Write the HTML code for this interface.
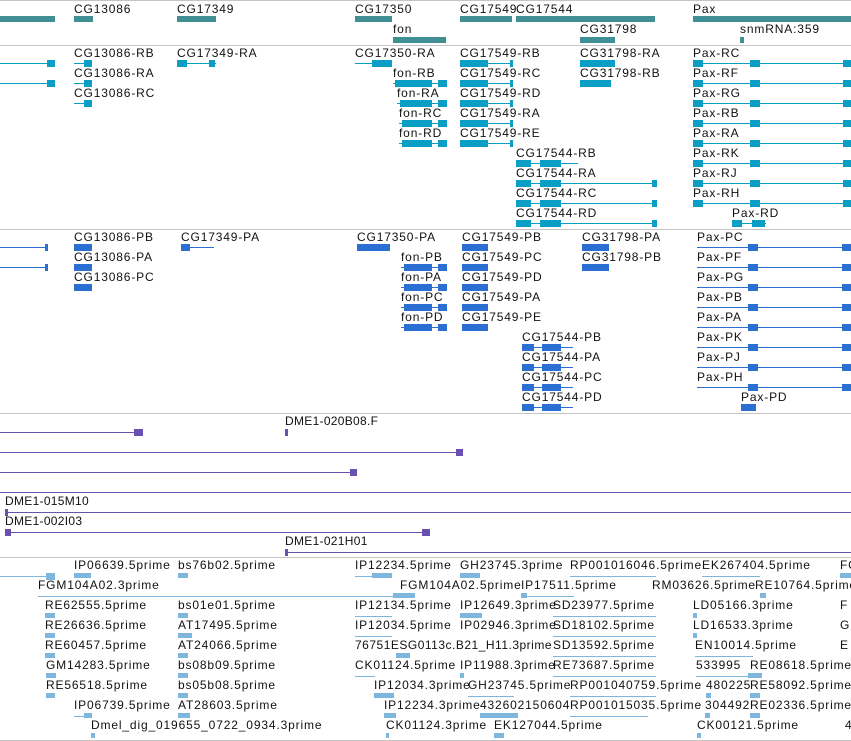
<!DOCTYPE html>
<html><head><meta charset="utf-8"><style>
body{margin:0;width:851px;height:741px;background:#fff;position:relative;overflow:hidden;font-family:"Liberation Sans","DejaVu Sans",sans-serif}
.t{position:absolute;font-size:12px;line-height:14px;letter-spacing:.85px;color:#111;white-space:nowrap}
.s{position:absolute;left:0;width:851px;height:1px;background:#c4c4c4}
.l{position:absolute;height:1px}
.b{position:absolute;height:7px}
.g{background:#3f8f94}.c{background:#0a9ec4}.p{background:#2c6fd2}.v{background:#6a50b0}.e{background:#7fb6de}
</style></head><body>
<div class="s" style="top:0"></div>
<div class="s" style="top:45px"></div>
<div class="s" style="top:229px"></div>
<div class="s" style="top:413px"></div>
<div class="s" style="top:557px"></div>
<div class="s" style="top:740px"></div>

<!-- Track 1 genes -->
<div class="b g" style="left:0;width:55px;top:16px;height:6px"></div>
<div class="t" style="left:74px;top:2px">CG13086</div><div class="b g" style="left:74px;width:19px;top:16px;height:6px"></div>
<div class="t" style="left:177px;top:2px">CG17349</div><div class="b g" style="left:177px;width:39px;top:16px;height:6px"></div>
<div class="t" style="left:355px;top:2px">CG17350</div><div class="b g" style="left:355px;width:37px;top:16px;height:6px"></div>
<div class="t" style="left:393px;top:22px">fon</div><div class="b g" style="left:393px;width:53px;top:37px;height:6px"></div>
<div class="t" style="left:460px;top:2px">CG17549</div><div class="b g" style="left:460px;width:52px;top:16px;height:6px"></div>
<div class="t" style="left:516px;top:2px">CG17544</div><div class="b g" style="left:516px;width:139px;top:16px;height:6px"></div>
<div class="t" style="left:580px;top:22px">CG31798</div><div class="b g" style="left:580px;width:35px;top:37px;height:6px"></div>
<div class="t" style="left:693px;top:2px">Pax</div><div class="b g" style="left:693px;width:158px;top:16px;height:6px"></div>
<div class="t" style="left:740px;top:22px">snmRNA:359</div><div class="b g" style="left:740px;width:4px;top:37px;height:6px"></div>

<!-- Track 2 transcripts -->
<div class="l c" style="left:0;width:50px;top:63px"></div><div class="b c" style="left:47px;width:8px;top:60px"></div>
<div class="l c" style="left:0;width:50px;top:83px"></div><div class="b c" style="left:47px;width:8px;top:80px"></div>
<div class="t" style="left:74px;top:46px">CG13086-RB</div><div class="l c" style="left:74px;width:18px;top:63px"></div><div class="b c" style="left:84px;width:8px;top:60px"></div>
<div class="t" style="left:74px;top:66px">CG13086-RA</div><div class="l c" style="left:74px;width:18px;top:83px"></div><div class="b c" style="left:84px;width:8px;top:80px"></div>
<div class="t" style="left:74px;top:86px">CG13086-RC</div><div class="l c" style="left:74px;width:18px;top:103px"></div><div class="b c" style="left:84px;width:8px;top:100px"></div>
<div class="t" style="left:177px;top:46px">CG17349-RA</div><div class="l c" style="left:177px;width:39px;top:63px"></div><div class="b c" style="left:177px;width:10px;top:60px"></div><div class="b c" style="left:209px;width:6px;top:60px"></div>
<div class="t" style="left:355px;top:46px">CG17350-RA</div><div class="l c" style="left:355px;width:37px;top:63px"></div><div class="b c" style="left:372px;width:20px;top:60px"></div>
<div class="t" style="left:393px;top:66px">fon-RB</div><div class="l c" style="left:393px;width:54px;top:83px"></div><div class="b c" style="left:395px;width:37px;top:80px"></div><div class="b c" style="left:438px;width:9px;top:80px"></div>
<div class="t" style="left:397px;top:86px">fon-RA</div><div class="l c" style="left:397px;width:50px;top:103px"></div><div class="b c" style="left:400px;width:32px;top:100px"></div><div class="b c" style="left:438px;width:9px;top:100px"></div>
<div class="t" style="left:399px;top:106px">fon-RC</div><div class="l c" style="left:399px;width:48px;top:123px"></div><div class="b c" style="left:402px;width:30px;top:120px"></div><div class="b c" style="left:438px;width:9px;top:120px"></div>
<div class="t" style="left:399px;top:126px">fon-RD</div><div class="l c" style="left:399px;width:48px;top:143px"></div><div class="b c" style="left:402px;width:30px;top:140px"></div><div class="b c" style="left:438px;width:9px;top:140px"></div>
<div class="t" style="left:460px;top:46px">CG17549-RB</div>
<div class="t" style="left:460px;top:66px">CG17549-RC</div>
<div class="t" style="left:460px;top:86px">CG17549-RD</div>
<div class="t" style="left:460px;top:106px">CG17549-RA</div>
<div class="t" style="left:460px;top:126px">CG17549-RE</div>
<div class="l c" style="left:460px;width:53px;top:63px"></div><div class="b c" style="left:460px;width:28px;top:60px"></div><div class="b c" style="left:510px;width:3px;top:60px"></div>
<div class="l c" style="left:460px;width:53px;top:83px"></div><div class="b c" style="left:460px;width:28px;top:80px"></div><div class="b c" style="left:510px;width:3px;top:80px"></div>
<div class="l c" style="left:460px;width:53px;top:103px"></div><div class="b c" style="left:460px;width:28px;top:100px"></div><div class="b c" style="left:510px;width:3px;top:100px"></div>
<div class="l c" style="left:460px;width:53px;top:123px"></div><div class="b c" style="left:460px;width:28px;top:120px"></div><div class="b c" style="left:510px;width:3px;top:120px"></div>
<div class="l c" style="left:460px;width:53px;top:143px"></div><div class="b c" style="left:460px;width:28px;top:140px"></div><div class="b c" style="left:510px;width:3px;top:140px"></div>
<div class="t" style="left:580px;top:46px">CG31798-RA</div><div class="b c" style="left:580px;width:35px;top:60px"></div>
<div class="t" style="left:580px;top:66px">CG31798-RB</div><div class="b c" style="left:580px;width:31px;top:80px"></div>
<div class="t" style="left:516px;top:146px">CG17544-RB</div><div class="l c" style="left:516px;width:62px;top:163px"></div><div class="b c" style="left:516px;width:15px;top:160px"></div><div class="b c" style="left:540px;width:21px;top:160px"></div>
<div class="t" style="left:516px;top:166px">CG17544-RA</div><div class="l c" style="left:516px;width:141px;top:183px"></div><div class="b c" style="left:516px;width:15px;top:180px"></div><div class="b c" style="left:540px;width:21px;top:180px"></div><div class="b c" style="left:652px;width:5px;top:180px"></div>
<div class="t" style="left:516px;top:186px">CG17544-RC</div><div class="l c" style="left:516px;width:141px;top:203px"></div><div class="b c" style="left:516px;width:15px;top:200px"></div><div class="b c" style="left:540px;width:21px;top:200px"></div><div class="b c" style="left:652px;width:5px;top:200px"></div>
<div class="t" style="left:516px;top:206px">CG17544-RD</div><div class="l c" style="left:516px;width:141px;top:223px"></div><div class="b c" style="left:516px;width:15px;top:220px"></div><div class="b c" style="left:540px;width:21px;top:220px"></div><div class="b c" style="left:652px;width:5px;top:220px"></div>
<div class="t" style="left:693px;top:46px">Pax-RC</div>
<div class="t" style="left:693px;top:66px">Pax-RF</div>
<div class="t" style="left:693px;top:86px">Pax-RG</div>
<div class="t" style="left:693px;top:106px">Pax-RB</div>
<div class="t" style="left:693px;top:126px">Pax-RA</div>
<div class="t" style="left:693px;top:146px">Pax-RK</div>
<div class="t" style="left:693px;top:166px">Pax-RJ</div>
<div class="t" style="left:693px;top:186px">Pax-RH</div>
<div class="t" style="left:732px;top:206px">Pax-RD</div><div class="l c" style="left:732px;width:34px;top:223px"></div><div class="b c" style="left:732px;width:10px;top:220px"></div><div class="b c" style="left:752px;width:13px;top:220px"></div>
<div class="l c" style="left:693px;width:158px;top:63px"></div><div class="b c" style="left:693px;width:10px;top:60px"></div><div class="b c" style="left:750px;width:10px;top:60px"></div><div class="b c" style="left:843px;width:8px;top:60px"></div>
<div class="l c" style="left:693px;width:158px;top:83px"></div><div class="b c" style="left:693px;width:10px;top:80px"></div><div class="b c" style="left:750px;width:10px;top:80px"></div><div class="b c" style="left:843px;width:8px;top:80px"></div>
<div class="l c" style="left:693px;width:158px;top:103px"></div><div class="b c" style="left:693px;width:10px;top:100px"></div><div class="b c" style="left:750px;width:10px;top:100px"></div><div class="b c" style="left:843px;width:8px;top:100px"></div>
<div class="l c" style="left:693px;width:158px;top:123px"></div><div class="b c" style="left:693px;width:10px;top:120px"></div><div class="b c" style="left:750px;width:10px;top:120px"></div><div class="b c" style="left:843px;width:8px;top:120px"></div>
<div class="l c" style="left:693px;width:158px;top:143px"></div><div class="b c" style="left:693px;width:10px;top:140px"></div><div class="b c" style="left:750px;width:10px;top:140px"></div><div class="b c" style="left:843px;width:8px;top:140px"></div>
<div class="l c" style="left:693px;width:158px;top:163px"></div><div class="b c" style="left:693px;width:10px;top:160px"></div><div class="b c" style="left:750px;width:10px;top:160px"></div><div class="b c" style="left:843px;width:8px;top:160px"></div>
<div class="l c" style="left:693px;width:158px;top:183px"></div><div class="b c" style="left:693px;width:10px;top:180px"></div><div class="b c" style="left:750px;width:10px;top:180px"></div><div class="b c" style="left:843px;width:8px;top:180px"></div>
<div class="l c" style="left:693px;width:158px;top:203px"></div><div class="b c" style="left:693px;width:10px;top:200px"></div><div class="b c" style="left:750px;width:10px;top:200px"></div><div class="b c" style="left:843px;width:8px;top:200px"></div>

<!-- Track 3 proteins -->
<div class="l p" style="left:0;width:48px;top:247px"></div><div class="b p" style="left:45px;width:3px;top:244px"></div>
<div class="l p" style="left:0;width:48px;top:267px"></div><div class="b p" style="left:45px;width:3px;top:264px"></div>
<div class="t" style="left:74px;top:230px">CG13086-PB</div><div class="b p" style="left:74px;width:18px;top:244px"></div>
<div class="t" style="left:74px;top:250px">CG13086-PA</div><div class="b p" style="left:74px;width:18px;top:264px"></div>
<div class="t" style="left:74px;top:270px">CG13086-PC</div><div class="b p" style="left:74px;width:18px;top:284px"></div>
<div class="t" style="left:181px;top:230px">CG17349-PA</div><div class="l p" style="left:181px;width:33px;top:247px"></div><div class="b p" style="left:181px;width:9px;top:244px"></div>
<div class="t" style="left:357px;top:230px">CG17350-PA</div><div class="b p" style="left:357px;width:33px;top:244px"></div>
<div class="t" style="left:401px;top:250px">fon-PB</div><div class="l p" style="left:401px;width:46px;top:267px"></div><div class="b p" style="left:404px;width:28px;top:264px"></div><div class="b p" style="left:438px;width:9px;top:264px"></div>
<div class="t" style="left:401px;top:270px">fon-PA</div><div class="l p" style="left:401px;width:46px;top:287px"></div><div class="b p" style="left:404px;width:28px;top:284px"></div><div class="b p" style="left:438px;width:9px;top:284px"></div>
<div class="t" style="left:401px;top:290px">fon-PC</div><div class="l p" style="left:401px;width:46px;top:307px"></div><div class="b p" style="left:404px;width:28px;top:304px"></div><div class="b p" style="left:438px;width:9px;top:304px"></div>
<div class="t" style="left:401px;top:310px">fon-PD</div><div class="l p" style="left:401px;width:46px;top:327px"></div><div class="b p" style="left:404px;width:28px;top:324px"></div><div class="b p" style="left:438px;width:9px;top:324px"></div>
<div class="t" style="left:462px;top:230px">CG17549-PB</div><div class="b p" style="left:462px;width:26px;top:244px"></div>
<div class="t" style="left:462px;top:250px">CG17549-PC</div><div class="b p" style="left:462px;width:26px;top:264px"></div>
<div class="t" style="left:462px;top:270px">CG17549-PD</div><div class="b p" style="left:462px;width:26px;top:284px"></div>
<div class="t" style="left:462px;top:290px">CG17549-PA</div><div class="b p" style="left:462px;width:26px;top:304px"></div>
<div class="t" style="left:462px;top:310px">CG17549-PE</div><div class="b p" style="left:462px;width:26px;top:324px"></div>
<div class="t" style="left:582px;top:230px">CG31798-PA</div><div class="b p" style="left:582px;width:27px;top:244px"></div>
<div class="t" style="left:582px;top:250px">CG31798-PB</div><div class="b p" style="left:582px;width:27px;top:264px"></div>
<div class="t" style="left:522px;top:330px">CG17544-PB</div><div class="l p" style="left:522px;width:51px;top:347px"></div><div class="b p" style="left:522px;width:12px;top:344px"></div><div class="b p" style="left:542px;width:19px;top:344px"></div>
<div class="t" style="left:522px;top:350px">CG17544-PA</div><div class="l p" style="left:522px;width:51px;top:367px"></div><div class="b p" style="left:522px;width:12px;top:364px"></div><div class="b p" style="left:542px;width:19px;top:364px"></div>
<div class="t" style="left:522px;top:370px">CG17544-PC</div><div class="l p" style="left:522px;width:51px;top:387px"></div><div class="b p" style="left:522px;width:12px;top:384px"></div><div class="b p" style="left:542px;width:19px;top:384px"></div>
<div class="t" style="left:522px;top:390px">CG17544-PD</div><div class="l p" style="left:522px;width:51px;top:407px"></div><div class="b p" style="left:522px;width:12px;top:404px"></div><div class="b p" style="left:542px;width:19px;top:404px"></div>
<div class="t" style="left:697px;top:230px">Pax-PC</div>
<div class="t" style="left:697px;top:250px">Pax-PF</div>
<div class="t" style="left:697px;top:270px">Pax-PG</div>
<div class="t" style="left:697px;top:290px">Pax-PB</div>
<div class="t" style="left:697px;top:310px">Pax-PA</div>
<div class="t" style="left:697px;top:330px">Pax-PK</div>
<div class="t" style="left:697px;top:350px">Pax-PJ</div>
<div class="t" style="left:697px;top:370px">Pax-PH</div>
<div class="t" style="left:741px;top:390px">Pax-PD</div><div class="b p" style="left:741px;width:15px;top:404px"></div>
<div class="l p" style="left:697px;width:154px;top:247px"></div><div class="b p" style="left:748px;width:10px;top:244px"></div><div class="b p" style="left:842px;width:9px;top:244px"></div>
<div class="l p" style="left:697px;width:154px;top:267px"></div><div class="b p" style="left:748px;width:10px;top:264px"></div><div class="b p" style="left:842px;width:9px;top:264px"></div>
<div class="l p" style="left:697px;width:154px;top:287px"></div><div class="b p" style="left:748px;width:10px;top:284px"></div><div class="b p" style="left:842px;width:9px;top:284px"></div>
<div class="l p" style="left:697px;width:154px;top:307px"></div><div class="b p" style="left:748px;width:10px;top:304px"></div><div class="b p" style="left:842px;width:9px;top:304px"></div>
<div class="l p" style="left:697px;width:154px;top:327px"></div><div class="b p" style="left:748px;width:10px;top:324px"></div><div class="b p" style="left:842px;width:9px;top:324px"></div>
<div class="l p" style="left:697px;width:154px;top:347px"></div><div class="b p" style="left:748px;width:10px;top:344px"></div><div class="b p" style="left:842px;width:9px;top:344px"></div>
<div class="l p" style="left:697px;width:154px;top:367px"></div><div class="b p" style="left:748px;width:10px;top:364px"></div><div class="b p" style="left:842px;width:9px;top:364px"></div>
<div class="l p" style="left:697px;width:154px;top:387px"></div><div class="b p" style="left:748px;width:10px;top:384px"></div><div class="b p" style="left:842px;width:9px;top:384px"></div>

<!-- Track 4 purple -->
<div class="l v" style="left:0;width:140px;top:432px"></div><div class="b v" style="left:134px;width:9px;top:429px"></div>
<div class="t" style="left:285px;top:414px;letter-spacing:.3px">DME1-020B08.F</div><div class="b v" style="left:285px;width:3px;top:429px"></div>
<div class="l v" style="left:0;width:462px;top:452px"></div><div class="b v" style="left:456px;width:7px;top:449px"></div>
<div class="l v" style="left:0;width:356px;top:472px"></div><div class="b v" style="left:350px;width:7px;top:469px"></div>
<div class="l v" style="left:0;width:851px;top:492px"></div>
<div class="t" style="left:5px;top:494px;letter-spacing:.3px">DME1-015M10</div><div class="l v" style="left:5px;width:846px;top:512px"></div><div class="b v" style="left:5px;width:3px;top:509px"></div>
<div class="t" style="left:5px;top:514px;letter-spacing:.3px">DME1-002I03</div><div class="l v" style="left:5px;width:425px;top:532px"></div><div class="b v" style="left:5px;width:6px;top:529px"></div><div class="b v" style="left:422px;width:8px;top:529px"></div>
<div class="t" style="left:285px;top:534px;letter-spacing:.3px">DME1-021H01</div><div class="l v" style="left:285px;width:566px;top:552px"></div><div class="b v" style="left:285px;width:3px;top:549px"></div>

<!-- Track 5 ESTs -->
<div class="l e" style="left:0;width:54px;top:576px"></div><div class="b e" style="left:46px;width:9px;top:573px"></div>
<div class="t" style="left:74px;top:558px">IP06639.5prime</div><div class="b e" style="left:74px;width:17px;top:573px;height:5px"></div>
<div class="t" style="left:178px;top:558px">bs76b02.5prime</div><div class="b e" style="left:178px;width:10px;top:573px;height:5px"></div>
<div class="t" style="left:355px;top:558px">IP12234.5prime</div><div class="l e" style="left:355px;width:37px;top:576px"></div><div class="b e" style="left:372px;width:20px;top:573px;height:5px"></div>
<div class="t" style="left:460px;top:558px">GH23745.3prime</div><div class="b e" style="left:460px;width:20px;top:573px;height:5px"></div>
<div class="t" style="left:570px;top:558px">RP001016046.5prime</div><div class="l e" style="left:570px;width:86px;top:576px"></div>
<div class="t" style="left:702px;top:558px">EK267404.5prime</div><div class="l e" style="left:702px;width:58px;top:576px"></div>
<div class="t" style="left:840px;top:558px">FC</div><div class="b e" style="left:840px;width:11px;top:573px;height:5px"></div>

<div class="t" style="left:38px;top:578px">FGM104A02.3prime</div><div class="l e" style="left:38px;width:372px;top:596px"></div><div class="b e" style="left:393px;width:22px;top:593px;height:5px"></div>
<div class="t" style="left:400px;top:578px">FGM104A02.5prime</div>
<div class="t" style="left:521px;top:578px">IP17511.5prime</div><div class="l e" style="left:521px;width:53px;top:596px"></div><div class="b e" style="left:521px;width:6px;top:593px;height:5px"></div>
<div class="t" style="left:652px;top:578px">RM03626.5prime</div>
<div class="t" style="left:755px;top:578px">RE10764.5prime</div><div class="b e" style="left:760px;width:6px;top:593px;height:5px"></div>

<div class="t" style="left:45px;top:598px">RE62555.5prime</div><div class="b e" style="left:45px;width:10px;top:613px;height:5px"></div>
<div class="t" style="left:178px;top:598px">bs01e01.5prime</div><div class="b e" style="left:178px;width:10px;top:613px;height:5px"></div>
<div class="t" style="left:355px;top:598px">IP12134.5prime</div><div class="l e" style="left:355px;width:37px;top:616px"></div>
<div class="t" style="left:460px;top:598px">IP12649.3prime</div><div class="b e" style="left:460px;width:22px;top:613px;height:5px"></div>
<div class="t" style="left:553px;top:598px">SD23977.5prime</div><div class="l e" style="left:553px;width:103px;top:616px"></div>
<div class="t" style="left:693px;top:598px">LD05166.3prime</div><div class="b e" style="left:693px;width:4px;top:613px;height:5px"></div>
<div class="t" style="left:840px;top:598px">F</div>

<div class="t" style="left:45px;top:618px">RE26636.5prime</div><div class="b e" style="left:45px;width:10px;top:633px;height:5px"></div>
<div class="t" style="left:178px;top:618px">AT17495.5prime</div><div class="b e" style="left:178px;width:14px;top:633px;height:5px"></div>
<div class="t" style="left:355px;top:618px">IP12034.5prime</div><div class="l e" style="left:355px;width:37px;top:636px"></div>
<div class="t" style="left:460px;top:618px">IP02946.3prime</div>
<div class="t" style="left:553px;top:618px">SD18102.5prime</div><div class="l e" style="left:553px;width:103px;top:636px"></div>
<div class="t" style="left:693px;top:618px">LD16533.3prime</div><div class="b e" style="left:693px;width:4px;top:633px;height:5px"></div>
<div class="t" style="left:840px;top:618px">G</div>

<div class="t" style="left:45px;top:638px">RE60457.5prime</div><div class="b e" style="left:45px;width:10px;top:653px;height:5px"></div>
<div class="t" style="left:178px;top:638px">AT24066.5prime</div><div class="b e" style="left:178px;width:10px;top:653px;height:5px"></div>
<div class="t" style="left:355px;top:638px;letter-spacing:.5px">76751ESG0113c.B21_H11.3prime</div><div class="b e" style="left:396px;width:14px;top:653px;height:5px"></div>
<div class="t" style="left:553px;top:638px">SD13592.5prime</div><div class="l e" style="left:553px;width:103px;top:656px"></div>
<div class="t" style="left:695px;top:638px">EN10014.5prime</div><div class="l e" style="left:695px;width:58px;top:656px"></div>
<div class="t" style="left:840px;top:638px">E</div>

<div class="t" style="left:46px;top:658px">GM14283.5prime</div><div class="b e" style="left:46px;width:10px;top:673px;height:5px"></div>
<div class="t" style="left:178px;top:658px">bs08b09.5prime</div><div class="b e" style="left:178px;width:10px;top:673px;height:5px"></div>
<div class="t" style="left:355px;top:658px">CK01124.5prime</div><div class="l e" style="left:355px;width:20px;top:676px"></div>
<div class="t" style="left:460px;top:658px">IP11988.3prime</div><div class="b e" style="left:460px;width:4px;top:673px;height:5px"></div>
<div class="t" style="left:553px;top:658px">RE73687.5prime</div><div class="l e" style="left:553px;width:103px;top:676px"></div>
<div class="t" style="left:696px;top:658px">533995</div><div class="t" style="left:750px;top:658px">RE08618.5prime</div><div class="l e" style="left:696px;width:62px;top:676px"></div><div class="b e" style="left:748px;width:14px;top:673px;height:5px"></div>

<div class="t" style="left:46px;top:678px">RE56518.5prime</div><div class="b e" style="left:46px;width:9px;top:693px;height:5px"></div>
<div class="t" style="left:178px;top:678px">bs05b08.5prime</div><div class="b e" style="left:178px;width:10px;top:693px;height:5px"></div>
<div class="t" style="left:374px;top:678px">IP12034.3prime</div><div class="b e" style="left:374px;width:20px;top:693px;height:5px"></div>
<div class="t" style="left:468px;top:678px">GH23745.5prime</div><div class="l e" style="left:468px;width:46px;top:696px"></div>
<div class="t" style="left:570px;top:678px">RP001040759.5prime</div><div class="l e" style="left:570px;width:86px;top:696px"></div>
<div class="t" style="left:706px;top:678px">480225</div><div class="b e" style="left:706px;width:5px;top:693px;height:5px"></div>
<div class="t" style="left:750px;top:678px">RE58092.5prime</div><div class="b e" style="left:750px;width:10px;top:693px;height:5px"></div>

<div class="t" style="left:74px;top:698px">IP06739.5prime</div><div class="l e" style="left:74px;width:18px;top:716px"></div><div class="b e" style="left:84px;width:8px;top:713px;height:5px"></div>
<div class="t" style="left:178px;top:698px">AT28603.5prime</div><div class="b e" style="left:178px;width:12px;top:713px;height:5px"></div>
<div class="t" style="left:384px;top:698px">IP12234.3prime</div><div class="b e" style="left:384px;width:12px;top:713px;height:5px"></div>
<div class="t" style="left:480px;top:698px">432602150604</div><div class="b e" style="left:480px;width:38px;top:713px;height:5px"></div>
<div class="t" style="left:570px;top:698px">RP001015035.5prime</div><div class="l e" style="left:570px;width:78px;top:716px"></div>
<div class="t" style="left:705px;top:698px">304492</div><div class="b e" style="left:705px;width:5px;top:713px;height:5px"></div>
<div class="t" style="left:750px;top:698px">RE02336.5prime</div><div class="b e" style="left:750px;width:10px;top:713px;height:5px"></div>

<div class="t" style="left:91px;top:718px">Dmel_dig_019655_0722_0934.3prime</div><div class="b e" style="left:91px;width:4px;top:733px;height:5px"></div>
<div class="t" style="left:386px;top:718px">CK01124.3prime</div><div class="b e" style="left:386px;width:3px;top:733px;height:5px"></div>
<div class="t" style="left:494px;top:718px">EK127044.5prime</div><div class="b e" style="left:494px;width:10px;top:733px;height:5px"></div>
<div class="t" style="left:697px;top:718px">CK00121.5prime</div><div class="b e" style="left:697px;width:4px;top:733px;height:5px"></div>
<div class="t" style="left:845px;top:718px">4</div>
</body></html>
